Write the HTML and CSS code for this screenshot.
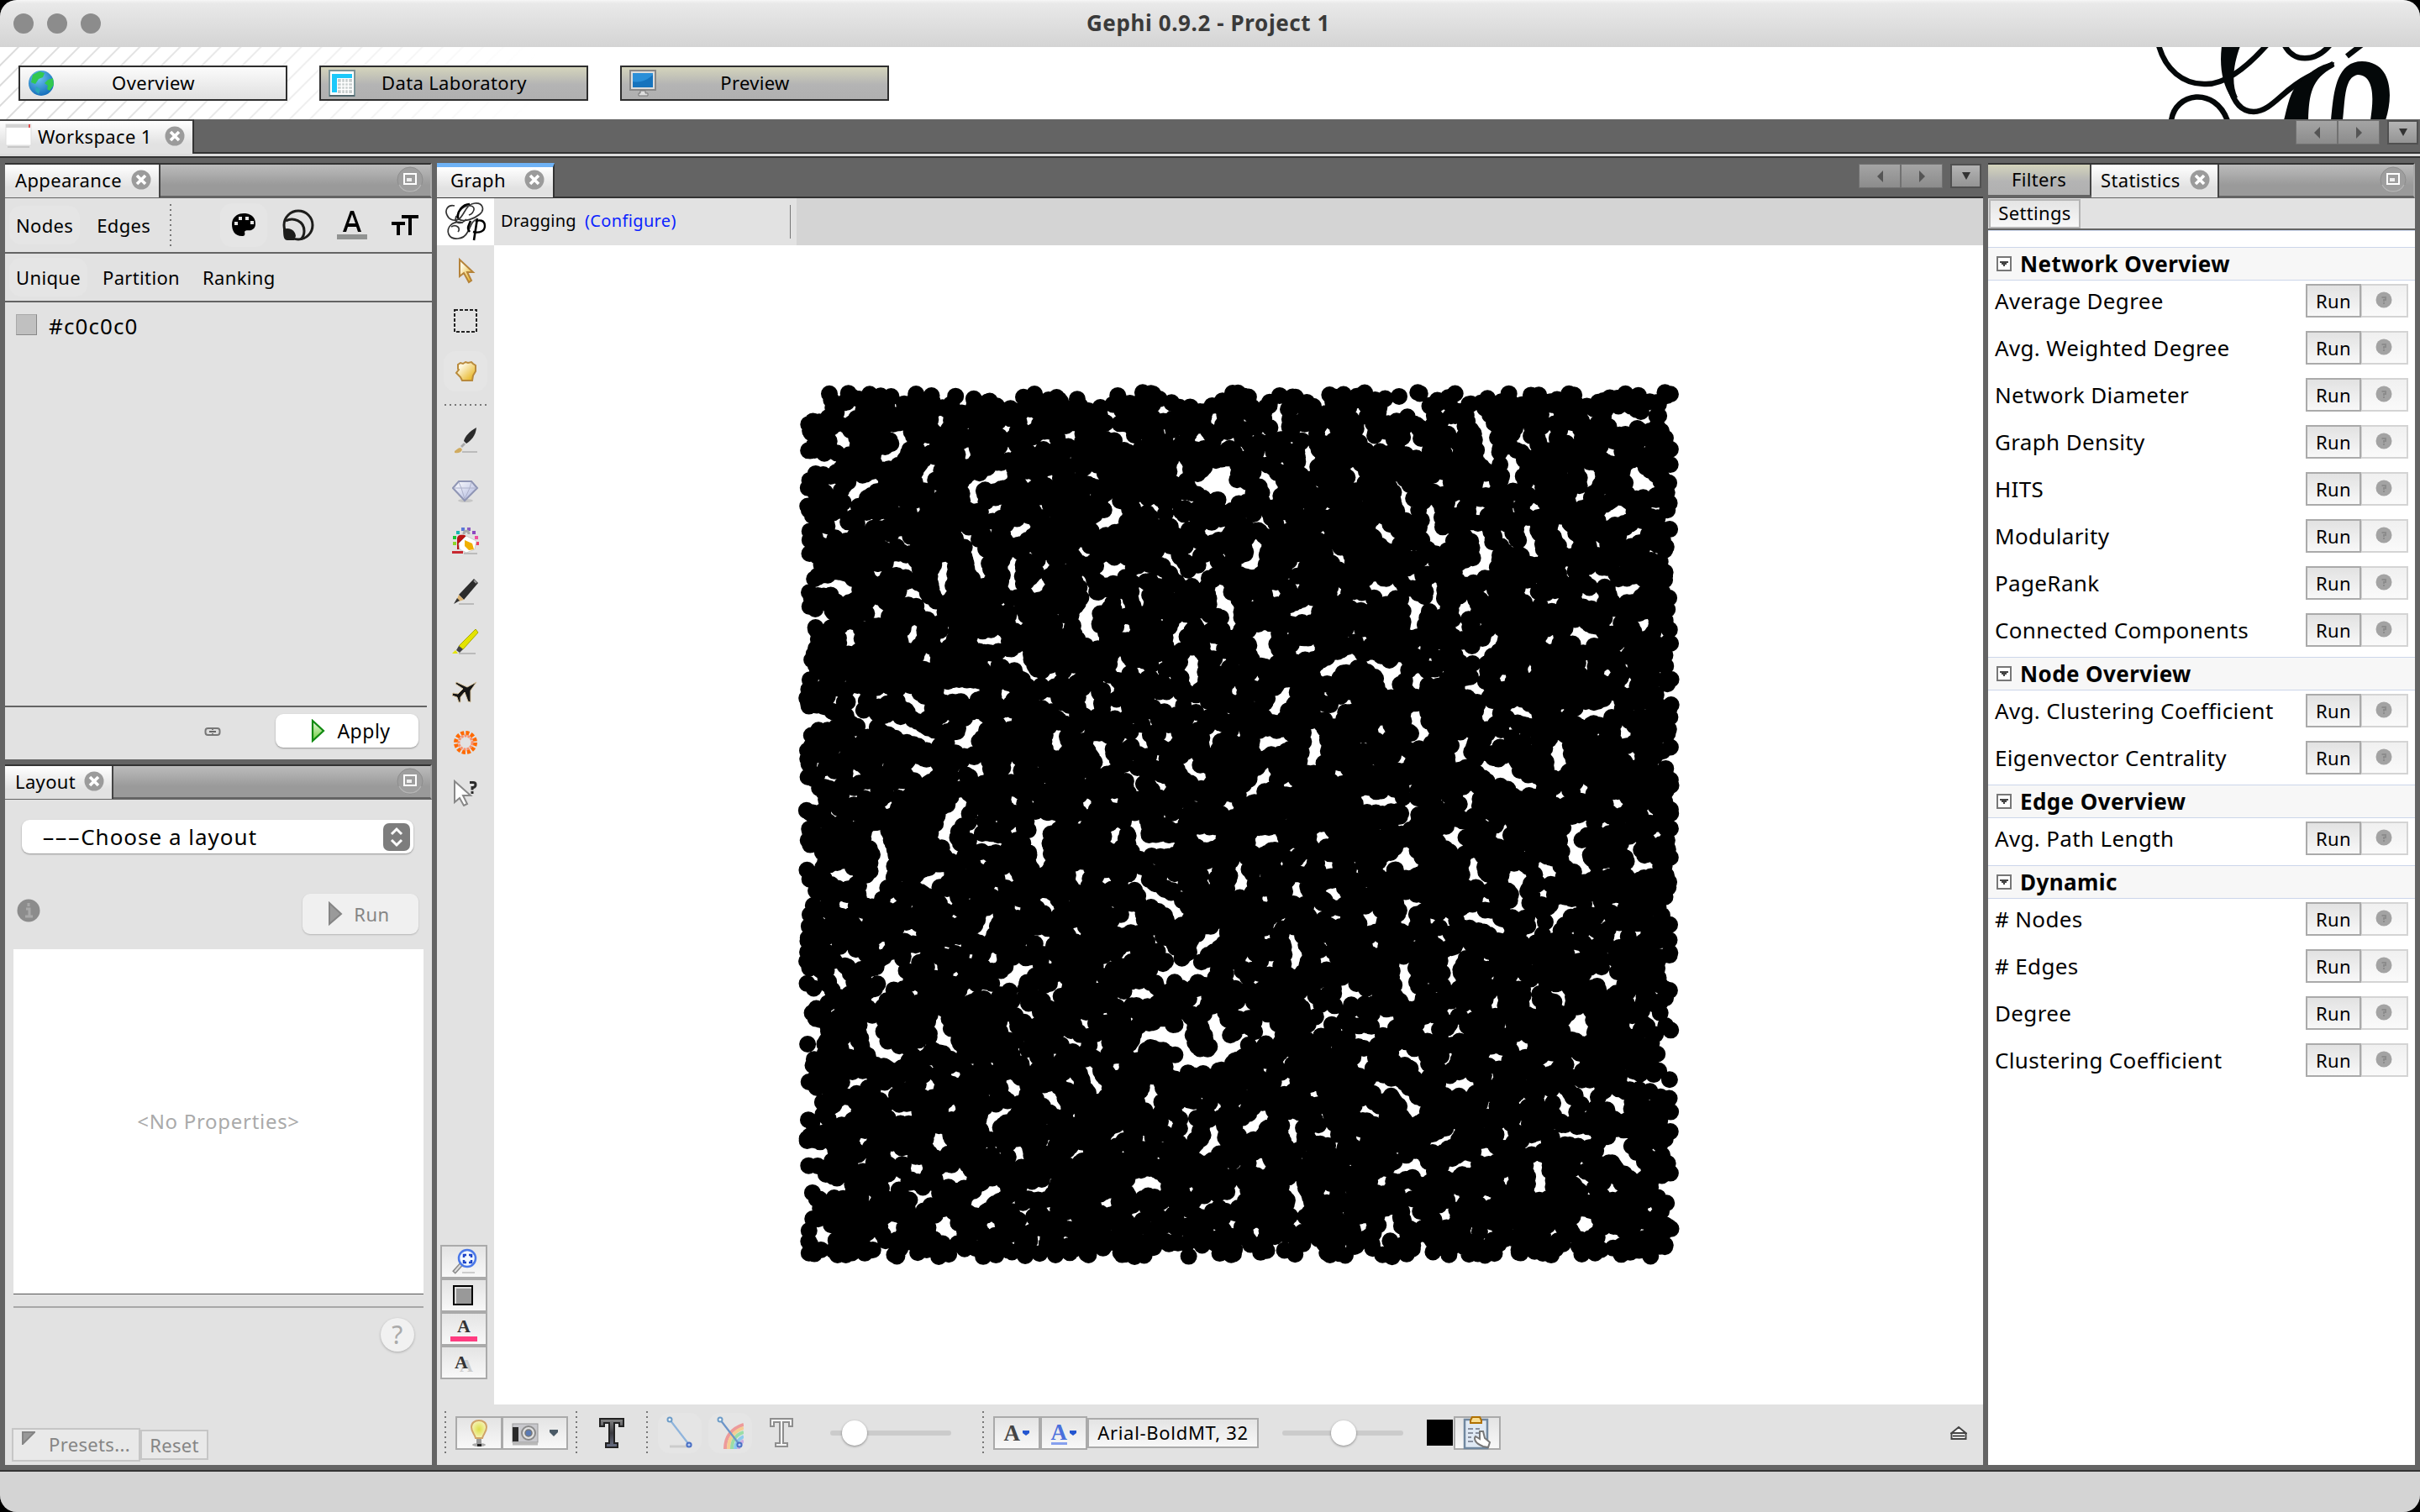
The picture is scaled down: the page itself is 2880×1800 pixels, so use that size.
FILE: index.html
```html
<!DOCTYPE html>
<html lang="en">
<head>
<meta charset="utf-8">
<title>Gephi 0.9.2 - Project 1</title>
<link rel="stylesheet" href="styles.css">
</head>
<body>
<svg width="0" height="0" class="defs">
  <defs>
    <linearGradient id="gold" x1="0" y1="0" x2="1" y2="1"><stop offset=".25" stop-color="#fdf6dc"/><stop offset="1" stop-color="#e3a900"/></linearGradient>
    <linearGradient id="green" x1="0" y1="0" x2="0" y2="1"><stop offset="0" stop-color="#e8f8e0"/><stop offset="1" stop-color="#6ccf3a"/></linearGradient>
    <linearGradient id="gem" x1="0" y1="0" x2="1" y2="1"><stop offset="0" stop-color="#fff"/><stop offset="1" stop-color="#a9b2dc"/></linearGradient>
    <radialGradient id="bulb" cx=".5" cy=".5" r=".6"><stop offset="0" stop-color="#dede48"/><stop offset=".6" stop-color="#efee98"/><stop offset="1" stop-color="#fbf8d8"/></radialGradient>
    <linearGradient id="tdark" x1="0" y1="0" x2="0" y2="1"><stop offset="0" stop-color="#888"/><stop offset=".5" stop-color="#3a3a3f"/><stop offset="1" stop-color="#6a7086"/></linearGradient>
    <radialGradient id="sea" cx=".4" cy=".3" r=".8"><stop offset="0" stop-color="#6cc4f0"/><stop offset="1" stop-color="#0a63b4"/></radialGradient>
  </defs>
  <symbol id="close" viewBox="0 0 24 24"><circle cx="12" cy="12" r="11.500" fill="#9b9b9b"/><path d="M7 7l10 10M17 7L7 17" stroke="#fff" stroke-width="3.600"/></symbol>
  <symbol id="dock" viewBox="0 0 32 32"><circle cx="16" cy="16" r="15" fill="#9e9e9e" stroke="#8d8d8d"/><path d="M3 22a14.500 14.500 0 0 0 26 0" fill="none" stroke="#b4b4b4" stroke-width="1.500"/><rect x="9" y="9" width="14" height="12" fill="none" stroke="#fff" stroke-width="2"/><rect x="12" y="14" width="6" height="4" fill="#eee"/></symbol>
  <symbol id="fold" viewBox="0 0 18 18"><rect x="1" y="1" width="16" height="16" fill="#fff" stroke="#777" stroke-width="2"/><path d="M4 6h10v2h-2v2h-2v2H8v-2H6V8H4z" fill="#444"/></symbol>
  <symbol id="ask" viewBox="0 0 20 20"><circle cx="10" cy="10" r="9.500" fill="#a3a3a3"/><path d="M7.500 7h4.500v3h-2v2M10 13v2" fill="none" stroke="#8c8c8c" stroke-width="2"/></symbol>
</svg>

<div class="window">
  <header class="titlebar">
    <div class="lights"><i></i><i></i><i></i></div>
    <h1>Gephi 0.9.2 - Project 1</h1>
  </header>

  <nav class="banner">
    <button class="mode on"><svg class="mi" viewBox="0 0 32 32"><circle cx="16" cy="16" r="15" fill="url(#sea)"/><path d="M6 6l8-4 6 2-2 5-5 2-4 6-5-2zM24 12l6-2 1 8-5 7-3-2 1-4-4-3z" fill="#32c850"/><path d="M10 20l5 3-2 6-4-4z" fill="#2aa8b8"/></svg><span>Overview</span></button>
    <button class="mode"><svg class="mi" viewBox="0 0 32 32"><rect x="1" y="1" width="30" height="30" fill="#fff" stroke="#7c9498" stroke-width="2"/><path d="M4 5h24v5H10v17H4z" fill="#1cc8fa"/><path d="M11 11h17v17H11z" fill="#c6cccc"/><path d="M15.500 11v17M19.500 11v17M23.500 11v17M11 15.500h17M11 19.500h17M11 23.500h17" stroke="#fff" stroke-width="1.500"/><path d="M1 31h30" stroke="#50666c" stroke-width="2"/></svg><span>Data Laboratory</span></button>
    <button class="mode"><svg class="mi" viewBox="0 0 32 32"><rect x="1" y="1" width="30" height="23" fill="#ddd" stroke="#888" stroke-width="2"/><rect x="4" y="4" width="24" height="17" fill="#2b8fd8"/><path d="M4 14c10 2 18-2 24-8v15H4z" fill="#1673bd"/><path d="M13 25h6v3h3v3H11v-3h2z" fill="#ddd" stroke="#777"/></svg><span>Preview</span></button>
    <svg class="logo" width="300" height="86" viewBox="0 0 300 86">
      <g fill="none" stroke="#040809" stroke-width="6.500">
        <path d="M9 -2C17 27 38 44 63 44Q95 46 139 -4"/>
        <path d="M24 88C28 54 76 46 91 88"/>
        <path d="M158 -4C168 19 196 19 214 -4"/>
        <path d="M251 -3L233 11"/>
        <path d="M93 45C98 66 108 77 122 77C144 76 155 52 186 36L217 20"/>
      </g>
      <path d="M84 -1H106C98 20 95 44 103 60L95 60C85 44 81 24 84 -1zM158 87C162 72 164 60 170 50C185 32 200 20 218 18L217 24C190 38 188 58 187 87zM214 87C217 60 218 17 251 17C288 18 288 60 279 87H261C265 62 266 34 246 33C230 36 231 60 228 87z" fill="#040809"/>
    </svg>
  </nav>

  <div class="wsbar">
    <div class="tab ws"><svg width="32" height="30" viewBox="0 0 32 30"><rect x="1" y="1" width="30" height="25" fill="#fff" stroke="#ddd"/><path d="M1 3h28" stroke="#d4d4d4" stroke-width="4"/><path d="M29 1v4" stroke="#e05050" stroke-width="2"/><path d="M3 28h26" stroke="#c8c8c8" stroke-width="2"/></svg><span>Workspace 1</span><svg class="x"><use href="#close"/></svg></div>
    <div class="pager"><i class="l"></i><i class="r"></i><b></b></div>
  </div>
  <div class="rule"></div>

  <main class="work">
    <div class="leftcol">
      <section class="panel appearance">
        <div class="tabs"><div class="tab t1"><span>Appearance</span><svg class="x"><use href="#close"/></svg></div><svg class="dock"><use href="#dock"/></svg></div>
        <div class="bar bar1">
          <span class="pill n">Nodes</span><span class="ed">Edges</span><i class="dots v"></i>
          <div class="looks">
            <span class="pill pal"><svg width="30" height="30" viewBox="0 0 30 30"><path d="M15 1C6 1 1 7 1 14s3 14 12 14c3 0 4-1 3-5 2-3 5-1 8-2 4-2 5-4 5-8C29 5 23 1 15 1z"/><g fill="#e4e4e4"><rect x="9" y="5" width="4" height="4"/><rect x="17" y="5" width="4" height="4"/><rect x="23" y="10" width="4" height="4"/><rect x="4" y="11" width="4" height="4"/></g></svg></span>
            <svg width="38" height="38" viewBox="0 0 38 38"><g fill="none" stroke="#1d1d1b" stroke-width="3"><circle cx="19" cy="19" r="17"/><path d="M4 14c9-5 22 0 22 12 0 5-2 8-4 10"/></g><path d="M1 24c8-3 14 1 15 8l-2 5H6c-4 0-5-4-5-13z" fill="#1d1d1b"/></svg>
            <svg width="36" height="38" viewBox="0 0 36 38"><path d="M7 27h4l2-6h10l2 6h4L20 2h-4zM14 17l4-11 4 11z" fill-rule="evenodd"/><rect y="30" width="36" height="6" fill="#919392"/></svg>
            <svg width="32" height="26" viewBox="0 0 32 26"><path d="M12 1h20v4h-8v20h-4V5h-8zM0 9h16v4h-6v12H6V13H0z"/></svg>
          </div>
        </div>
        <div class="bar bar2"><span class="pill n">Unique</span><span>Partition</span><span>Ranking</span></div>
        <div class="color"><i></i><span>#c0c0c0</span></div>
        <div class="apply">
          <svg width="20" height="12" viewBox="0 0 20 12"><rect x="1.500" y="2" width="17" height="8" rx="3" fill="#ddd" stroke="#777" stroke-width="2"/><path d="M6 6h8" stroke="#666" stroke-width="2"/><path d="M10 1v3M10 8v3" stroke="#777" stroke-width="2"/></svg>
          <button class="mac"><svg width="18" height="28" viewBox="0 0 18 28"><path d="M2 2v24L15 14z" fill="url(#green)" stroke="#108a10" stroke-width="2.200"/></svg><span>Apply</span></button>
        </div>
      </section>

      <section class="panel layout">
        <div class="tabs"><div class="tab t2"><span>Layout</span><svg class="x"><use href="#close"/></svg></div><svg class="dock"><use href="#dock"/></svg></div>
        <div class="lay">
          <div class="combo"><span><em>---</em>Choose a layout</span><svg width="32" height="33" viewBox="0 0 32 33"><rect width="32" height="33" rx="7" fill="#7d7d7d"/><path d="M10 13l6-6 6 6M10 20l6 6 6-6" fill="none" stroke="#fff" stroke-width="3"/></svg></div>
          <div class="runrow"><svg width="28" height="28" viewBox="0 0 28 28"><circle cx="14" cy="14" r="13.500" fill="#8c8c8c"/><path d="M14 5v4M11 12h4v8M10 21h9" stroke="#a9a9a9" stroke-width="3" fill="none"/></svg>
            <button class="mac off"><svg width="18" height="30" viewBox="0 0 18 30"><path d="M2 2v25L16 15z" fill="#9a9a9a" stroke="#858585" stroke-width="2"/></svg><span>Run</span></button></div>
          <div class="props">&lt;No Properties&gt;</div>
          <div class="hr"></div>
          <div class="help">?</div>
          <div class="presets"><span class="p1"><svg width="16" height="16" viewBox="0 0 16 16"><path d="M1 1h14L1 15z" fill="#999" stroke="#858585" stroke-width="2"/></svg>Presets...</span><span class="p2">Reset</span></div>
        </div>
      </section>
    </div>

    <section class="panel graph">
      <div class="gtabs"><div class="tab"><span>Graph</span><svg class="x"><use href="#close"/></svg></div><div class="pager"><i class="l"></i><i class="r"></i><b></b></div></div>
      <div class="gprops">
        <div class="glogo"><svg width="50" height="48" viewBox="0 0 50 48"><g fill="none" stroke="#333" stroke-width="1.700"><path d="M12 5C4 3 0 10 3 16c2 5 8 8 14 5C24 16 25 3 36 2c10-1 12 8 6 13-6 5-18 10-25 6-6-4 4-17 14-16 7 1 4 9-2 11"/><path d="M22 25C8 22 2 32 5 39c4 8 18 6 22-2 4-6 5-15 12-16"/><path d="M8 30c6-4 12 2 8 6M14 17c-3 8 4 12 12 4"/></g><path d="M16 20c-1-8 5-17 14-17M31 23c-2 6-5 8-1 13M39 20l-4 26" fill="none" stroke="#000" stroke-width="2.600"/><path d="M37 24c4-3 11-2 11 5 0 6-6 9-14 7" fill="none" stroke="#000" stroke-width="2.400"/></svg></div>
        <span>Dragging</span><a>(Configure)</a><i></i><div class="rest"></div>
      </div>
      <div class="gmid">
        <div class="tools">
          <div class="t h1"><svg class="ic" viewBox="0 0 32 32"><path d="M9 3v20l5-4 6 11 3-2-5-10h7z" fill="url(#gold)" stroke="#b5833a" stroke-width="2"/></svg></div>
          <div class="t"><svg class="ic" viewBox="0 0 32 32"><rect x="3" y="3" width="26" height="26" fill="none" stroke="#222" stroke-width="2" stroke-dasharray="4 2"/></svg></div>
          <div class="t"><span class="pill hand"><svg class="ic" viewBox="0 0 32 32"><path d="M7 13V8l3-2 3 1 3-2 3 1 4-1 2 2 3 2v7l-3 5-1 6H12l-2-4-5-5 3-4z" fill="url(#gold)" stroke="#b98a3c" stroke-width="2"/></svg></span></div>
          <i class="dots h"></i>
          <div class="t h2"><svg class="ic" viewBox="0 0 32 32"><path d="M12 30h18" stroke="#bbb" stroke-width="2"/><path d="M29 1c-8 4-14 11-15 16l3 3c6-4 11-9 12-19z" fill="#2b2b2b"/><path d="M14 19l-4 4 2 2 4-4z" fill="#aaa"/><path d="M3 29c2-1 4-4 7-4l2 2c-1 4-5 5-9 4z" fill="#d0ab60"/></svg></div>
          <div class="t"><svg class="ic" viewBox="0 0 32 32"><ellipse cx="16" cy="28" rx="9" ry="2" fill="#c6c6c6"/><path d="M8 5h15l7 8-15 15L1 13z" fill="url(#gem)" stroke="#8f95b4" stroke-width="2"/><path d="M2 13h27M8 6l3 7 4 13 6-13 2-7" fill="none" stroke="#aeb2cb"/></svg></div>
          <div class="t"><svg class="ic" viewBox="0 0 32 32"><g><rect x="5" y="4" width="4" height="4" fill="#18b8b0"/><rect x="11" y="0" width="4" height="4" fill="#5a78d8"/><rect x="18" y="0" width="4" height="4" fill="#8c5ac0"/><rect x="24" y="4" width="4" height="4" fill="#8c48c0"/><rect x="27" y="10" width="4" height="4" fill="#f050a0"/><rect x="28" y="17" width="4" height="4" fill="#f04060"/><rect x="1" y="10" width="4" height="4" fill="#18c838"/><rect x="1" y="17" width="4" height="4" fill="#8cd828"/></g><path d="M14 8c0-5 6-5 6 0" fill="none" stroke="#aaa" stroke-width="3"/><path d="M6 26V13c0-4 4-5 9-4l4 3-9 6v8z" fill="#b81414"/><path d="M8 19l9-9 12 6-2 10-10 4-8-4z" fill="#fff" stroke="#ccc"/><path d="M15 15l9 4 2 7-6 1-5-5z" fill="#f0b000"/><path d="M0 28h13v3H0z" fill="#c82830"/><path d="M14 31h16" stroke="#bbb" stroke-width="2"/></svg></div>
          <div class="t"><svg class="ic" viewBox="0 0 32 32"><path d="M8 31h18" stroke="#bbb" stroke-width="2"/><path d="M26 1l5 5-17 20-6-6z" fill="#2c2c2c"/><path d="M26 3l3 3" stroke="#999" stroke-width="2"/><path d="M8 20l6 6-6 2-2-3z" fill="#d8b070"/><path d="M6 24l3 3-7 4z" fill="#333"/></svg></div>
          <div class="t"><svg class="ic" viewBox="0 0 32 32"><path d="M8 30h20" stroke="#bbb" stroke-width="2"/><path d="M28 1l3 4-18 20-5-4z" fill="#e4e400" stroke="#a8a800"/><path d="M8 21l5 4-4 4-4-3z" fill="#444"/><path d="M4 26l3 4H0z" fill="#e4e400"/></svg></div>
          <div class="t"><svg class="ic" viewBox="0 0 32 32"><path d="M5 4l13 6 11-6-7 10 0 14-3-1-4-11-5 6 0 6-2 0-2-6-6-2 1-3 6 1 6-6-9-6z" fill="#151515" stroke="#d8c4a0" stroke-width="1"/></svg></div>
          <div class="t"><svg class="ic" viewBox="0 0 32 32"><circle cx="16" cy="16" r="11.500" fill="none" stroke="#ff6a00" stroke-width="5" stroke-dasharray="4 2.020"/><circle cx="16" cy="16" r="8" fill="none" stroke="#f8906c" stroke-width="3" stroke-dasharray="3 1"/></svg></div>
          <div class="t"><svg class="ic" viewBox="0 0 32 32"><path d="M3 2v25l6-5 5 9 4-2-5-10h9z" fill="#fff" stroke="#888" stroke-width="2"/><path d="M21 3.500h4c4 0 4 5 0 6h-1v3M24 14v3" fill="none" stroke="#2c2c2c" stroke-width="3"/></svg></div>
          <div class="views">
            <span><svg class="ic" viewBox="0 0 32 32"><path d="M14 29h15" stroke="#ccc" stroke-width="2"/><path d="M14 18L4 29" stroke="#888" stroke-width="5"/><path d="M13 19L5 28" stroke="#ddd" stroke-width="2"/><circle cx="20" cy="12" r="10" fill="#f2f8ff" stroke="#4a78e8" stroke-width="2.500"/><path d="M16 11V8h3M22 8h3v3M25 14v3h-3M19 17h-3v-3" fill="none" stroke="#1c44c8" stroke-width="2.500"/></svg></span>
            <span><svg class="ic" viewBox="0 0 32 32"><rect x="4" y="5" width="22" height="22" fill="#999" stroke="#000" stroke-width="2"/><path d="M6 26V7h19" fill="none" stroke="#ddd" stroke-width="2"/></svg></span>
            <span class="aa"><b>A</b><em></em></span>
            <span class="aa sh"><b>A</b></span>
          </div>
        </div>
        <canvas id="net" width="1772" height="1380"></canvas>
      </div>
      <div class="gbot">
        <i class="dots v d1"></i>
        <div class="grp g1">
          <span class="btn w55"><svg class="ic" viewBox="0 0 32 32"><ellipse cx="16" cy="30" rx="8" ry="2" fill="#aaa"/><path d="M12 22c-1-5-5-7-5-13C7 4 11 1 16 1s9 3 9 8c0 6-4 8-5 13z" fill="url(#bulb)" stroke="#d0a468" stroke-width="2"/><path d="M13 23h6v6l-3 2-3-2z" fill="#999"/><path d="M14 29h5v3h-5z" fill="#222"/></svg></span>
          <span class="btn w79"><svg class="ic" viewBox="0 0 32 32"><path d="M1 29h30" stroke="#b8b8b8" stroke-width="3"/><rect x="1" y="5" width="30" height="22" fill="#c8c8cc" stroke="#999"/><rect x="1" y="9" width="7" height="17" fill="#2a2a2a"/><circle cx="20" cy="16" r="8" fill="#e0e0e0" stroke="#8a8a8a" stroke-width="2"/><circle cx="20" cy="16" r="4" fill="#5a7ab4" stroke="#777" stroke-width="1.500"/></svg><svg width="10" height="8" viewBox="0 0 10 8"><path d="M0 0h10v3L5 8 0 3z" fill="#4a5a66"/></svg></span>
        </div>
        <i class="dots v d2"></i>
        <svg class="tt" width="32" height="40" viewBox="0 0 32 40"><path d="M2 3h28v9h-5V8h-6v24h4v5H9v-5h4V8H7v4H2z" fill="url(#tdark)" stroke="#222" stroke-width="2"/></svg>
        <i class="dots v d3"></i>
        <span class="pill e1"><svg width="32" height="42" viewBox="0 0 32 42"><path d="M4 37h22" stroke="#ccc" stroke-width="3"/><path d="M4 5l24 31" stroke="#8fb4dc" stroke-width="2.200"/><circle cx="4" cy="5" r="2.500" fill="#fff" stroke="#6c9cc8" stroke-width="2"/><circle cx="27" cy="35" r="2.600" fill="#bcd0f4" stroke="#4a70c4" stroke-width="2"/></svg></span>
        <span class="pill e2"><svg width="32" height="42" viewBox="0 0 32 42"><g fill="none" stroke-width="4" opacity=".8"><path d="M10 40c0-14 7-24 22-29" stroke="#f08888"/><path d="M14 40c0-12 6-21 18-25" stroke="#f8c880"/><path d="M18 40c0-10 5-17 14-20" stroke="#88dc98"/><path d="M22 40c0-8 4-12 10-15" stroke="#78c4f0"/><path d="M26 40c0-5 3-8 6-10" stroke="#c4a0e0"/></g><path d="M4 5l24 31" stroke="#6c94c8" stroke-width="2.200"/><circle cx="4" cy="5" r="2.500" fill="#fff" stroke="#6c9cc8" stroke-width="2"/><circle cx="27" cy="35" r="2.600" fill="#bcd0f4" stroke="#4a70c4" stroke-width="2"/></svg></span>
        <svg class="to" width="32" height="40" viewBox="0 0 32 40"><path d="M3 3h26v9h-4V7h-7v25h5v4H9v-4h5V7H7v5H3z" fill="#f4f4f4" stroke="#8e8e8e" stroke-width="2"/></svg>
        <div class="slider s1"><i></i></div>
        <i class="dots v d4"></i>
        <div class="grp g2">
          <span class="btn w56 fa"><b>A</b><svg width="8" height="6" viewBox="0 0 8 6"><path d="M0 0h8v3L4 6 0 3z" fill="#2456d0"/></svg></span>
          <span class="btn w56 fa blue"><b>A</b><svg width="8" height="6" viewBox="0 0 8 6"><path d="M0 0h8v3L4 6 0 3z" fill="#2456d0"/></svg></span>
          <span class="btn font">Arial-BoldMT, 32</span>
        </div>
        <div class="slider s2"><i></i></div>
        <div class="swatch"></div>
        <span class="btn w56"><svg width="34" height="40" viewBox="0 0 34 40"><rect x="2" y="4" width="27" height="34" fill="#dfe9f4" stroke="#7088a0" stroke-width="2.500"/><path d="M9 5l2-4h9l2 4v3H9z" fill="#f8dc90" stroke="#b07000" stroke-width="2"/><path d="M6 15h6M6 20h6M6 25h4M6 30h6M15 15h5M15 20h4" stroke="#8890a0" stroke-width="2"/><path d="M20 34c-6-3-7-8-5-10l5 3V18h4l2 8 6 5-2 6-6-1z" fill="#fff" stroke="#777" stroke-width="2"/></svg></span>
        <svg class="eject" width="20" height="18" viewBox="0 0 20 18"><path d="M1.500 9L10 2l8.500 7zM1.500 9h17v7h-17zM3 12.500h14" fill="#fff" stroke="#444" stroke-width="2"/></svg>
      </div>
    </section>

    <section class="panel stats">
      <div class="tabs"><div class="tab t3">Filters</div><div class="tab t4"><span>Statistics</span><svg class="x"><use href="#close"/></svg></div><svg class="dock"><use href="#dock"/></svg></div>
      <div class="set"><span>Settings</span></div>
      <div class="list">
        <h2><svg><use href="#fold"/></svg>Network Overview</h2>
        <ul>
          <li><span>Average Degree</span><b>Run</b><i><svg><use href="#ask"/></svg></i></li>
          <li><span>Avg. Weighted Degree</span><b>Run</b><i><svg><use href="#ask"/></svg></i></li>
          <li><span>Network Diameter</span><b>Run</b><i><svg><use href="#ask"/></svg></i></li>
          <li><span>Graph Density</span><b>Run</b><i><svg><use href="#ask"/></svg></i></li>
          <li><span>HITS</span><b>Run</b><i><svg><use href="#ask"/></svg></i></li>
          <li><span>Modularity</span><b>Run</b><i><svg><use href="#ask"/></svg></i></li>
          <li><span>PageRank</span><b>Run</b><i><svg><use href="#ask"/></svg></i></li>
          <li><span>Connected Components</span><b>Run</b><i><svg><use href="#ask"/></svg></i></li>
        </ul>
        <h2><svg><use href="#fold"/></svg>Node Overview</h2>
        <ul>
          <li><span>Avg. Clustering Coefficient</span><b>Run</b><i><svg><use href="#ask"/></svg></i></li>
          <li><span>Eigenvector Centrality</span><b>Run</b><i><svg><use href="#ask"/></svg></i></li>
        </ul>
        <h2><svg><use href="#fold"/></svg>Edge Overview</h2>
        <ul>
          <li><span>Avg. Path Length</span><b>Run</b><i><svg><use href="#ask"/></svg></i></li>
        </ul>
        <h2><svg><use href="#fold"/></svg>Dynamic</h2>
        <ul>
          <li><span># Nodes</span><b>Run</b><i><svg><use href="#ask"/></svg></i></li>
          <li><span># Edges</span><b>Run</b><i><svg><use href="#ask"/></svg></i></li>
          <li><span>Degree</span><b>Run</b><i><svg><use href="#ask"/></svg></i></li>
          <li><span>Clustering Coefficient</span><b>Run</b><i><svg><use href="#ask"/></svg></i></li>
        </ul>
      </div>
    </section>
  </main>
  <footer class="status"></footer>
</div>
<script src="graph.js"></script>
</body>
</html>
```
FILE: styles.css
```css
* { box-sizing: border-box; }
body { margin: 0; background: #000; font: 22px/28px "Noto Sans", "Open Sans", sans-serif; letter-spacing: .35px; color: #000; }
h1, h2, ul { margin: 0; padding: 0; }
svg { display: block; flex: none; }
button { font: inherit; color: inherit; letter-spacing: inherit; padding: 0; margin: 0; }
i, em { font-style: normal; }
.defs { position: absolute; }
.window { width: 2880px; height: 1800px; display: flex; flex-direction: column; background: #646464; border-radius: 20px; overflow: hidden; white-space: nowrap; }

.titlebar { height: 56px; flex: none; display: grid; grid-template-columns: 300px 1fr 300px; align-items: center; background: linear-gradient(#f6f6f6, #e9e9e9 4px, #d4d4d4); }
.titlebar h1 { font-size: 26px; font-weight: 700; color: #3a3a3a; text-align: center; letter-spacing: .6px; margin: 0 4px 3px 0; }
.lights { display: flex; gap: 16px; padding-left: 16px; }
.lights i { width: 24px; height: 24px; border-radius: 50%; background: #8c8c8c; }

.banner { height: 86px; flex: none; display: flex; align-items: center; gap: 38px; padding: 0 20px 0 22px; background: linear-gradient(90deg, rgba(255,255,255,.1), #fff 640px), repeating-linear-gradient(135deg, #fff 0 14px, #d6d6d6 15px 16px, #fff 17px); }
.mode { width: 320px; height: 42px; border: 2px solid #2e2e2e; background: linear-gradient(#d4d4bc, #b4b4b4 55%, #b0b0b0); display: flex; align-items: center; padding: 0 9px; }
.mode.on { background: linear-gradient(#fbfbfb, #e0e0e0); }
.mode span { flex: 1; text-align: center; padding: 0 31px 3px 0; }
.mi { width: 32px; height: 32px; }
.logo { margin-left: auto; }

.wsbar { height: 41px; flex: none; display: flex; justify-content: space-between; border-bottom: 2px solid #333; padding-right: 2px; }
.tab { display: flex; align-items: center; background: linear-gradient(#fff, #e2e2e2 70%); flex: none; padding-bottom: 3px; }
.tab .x { width: 24px; height: 24px; }
.ws { width: 231px; height: 41px; padding: 0 0 4px 6px; border-right: 2px solid #333; border-top: 2px solid #444; }
.ws span { padding-left: 7px; width: 158px; }
.pager { display: flex; height: 29px; margin-top: 1px; }
.pager i, .pager b { display: flex; align-items: center; justify-content: center; border: 1px solid #717171; background: linear-gradient(#a4a4a4, #8c8c8c); width: 50px; }
.pager b { width: 37px; margin-left: 9px; background: linear-gradient(#b4b4b4, #949494); border: 2px solid #505050; }
.pager i::before { content: ""; border: 7px solid transparent; }
.pager .l::before { border-right-color: #555; border-left: 0; }
.pager .r::before { border-left-color: #555; border-right: 0; }
.pager b::before { content: ""; border: 5px solid transparent; border-top: 9px solid #333; border-bottom: 0; }
.rule { height: 5px; flex: none; background: #dcdcdc; border-bottom: 2px solid #333; }

.work { flex: 1; display: grid; grid-template-columns: 508px 1840px 508px; column-gap: 6px; padding: 6px 6px; min-height: 0; }
.panel { display: flex; flex-direction: column; min-height: 0; background: #e2e2e2; }
.leftcol { display: grid; grid-template-rows: 710px 834px; row-gap: 6px; }
.tabs { height: 42px; flex: none; display: flex; background: linear-gradient(#bcbcbc, #9a9a9a 65%); border-top: 2px solid #333; border-bottom: 3px solid #646464; border-right: 2px solid #aaa; }
.tabs .tab { height: 39px; border-right: 2px solid #444; padding-left: 12px; justify-content: space-between; padding-right: 9px; }
.tabs .dock { width: 32px; height: 32px; margin: 2px 8px 0 auto; }
.t1 { width: 185px; }
.t2 { width: 129px; }
.pill { background: #e5e5e5; border-radius: 14px; display: flex; align-items: center; justify-content: center; }
.bar { display: flex; align-items: center; border-bottom: 2px solid #646464; flex: none; }
.bar1 { height: 66px; }
.bar2 { height: 58px; gap: 27px; padding-bottom: 1px; }
.pill.n { height: 46px; padding: 0 8px; margin-left: 5px; }
.bar2 .pill.n { margin-right: -9px; }
.ed { width: 64px; margin: 0 23px 0 20px; }
.dots { flex: none; display: block; }
.dots.v { width: 2px; height: 50px; background: repeating-linear-gradient(#777 0 2px, transparent 2px 6px); }
.dots.h { width: 50px; height: 2px; background: repeating-linear-gradient(90deg, #777 0 2px, transparent 2px 6px); }
.looks { display: flex; align-items: center; margin-left: 58px; }
.pal { width: 56px; height: 52px; margin-right: 18px; }
.looks > svg:nth-child(2) { margin-right: 27px; }
.looks > svg:nth-child(3) { margin-right: 29px; }
.color { flex: 1; display: flex; align-items: flex-start; padding: 14px 13px; font-size: 26px; gap: 14px; letter-spacing: 1.1px; }
.color i { width: 25px; height: 25px; background: #c0c0c0; border: 1px solid #aaa; border-right-color: #888; border-bottom-color: #888; }
.apply { height: 64px; margin-right: 6px; border-top: 2px solid #646464; display: flex; align-items: flex-start; padding: 8px 10px 0 0; justify-content: flex-end; }
.apply > svg { margin: 15px 65px 0 0; }
.mac { width: 170px; height: 40px; border: 0; border-radius: 9px; background: #fff; box-shadow: 0 1px 2px rgba(0,0,0,.35); display: flex; align-items: center; justify-content: center; gap: 13px; padding-left: 9px; font-size: 23px; letter-spacing: .5px; }
.mac.off { width: 138px; height: 48px; background: #f0f0f0; color: #858585; gap: 13px; font-size: 22px; padding: 0 10px 0 6px; box-shadow: 0 1px 2px rgba(0,0,0,.2); }

.lay { flex: 1; display: flex; flex-direction: column; padding: 24px 10px 4px 10px; }
.combo { width: 466px; height: 40px; margin-left: 10px; border-radius: 9px; background: #fff; box-shadow: 0 1px 2px rgba(0,0,0,.35); display: flex; align-items: center; justify-content: space-between; padding: 0 4px 0 24px; font-size: 26px; letter-spacing: 1px; }
.combo em { display: inline-block; letter-spacing: 0; transform: scaleX(1.8); transform-origin: left; margin-right: 21px; }
.runrow { display: flex; justify-content: space-between; margin-top: 48px; padding: 0 6px 0 4px; }
.runrow > svg { margin-top: 6px; }
.props { height: 411px; margin-top: 18px; background: #fff; border-bottom: 1px solid #555; color: #aaa; display: flex; align-items: center; justify-content: center; font-size: 24px; letter-spacing: .7px; }
.hr { height: 2px; background: #a8a8a8; margin-top: 14px; }
.help { width: 40px; height: 40px; border-radius: 50%; background: #f1f1f1; color: #aaa; box-shadow: 0 1px 3px rgba(0,0,0,.25); margin: 12px 11px 0 auto; font-size: 30px; line-height: 40px; text-align: center; }
.presets { display: flex; align-items: center; margin: auto 0 0 -2px; color: #858585; }
.presets span { border: 2px solid #c6c6c6; background: #e9e9e9; display: flex; }
.p1 { width: 153px; height: 40px; padding: 3px 0 0 10px; gap: 16px; }
.p2 { width: 81px; height: 36px; justify-content: center; align-items: center; padding-bottom: 1px; }
.p1 svg { margin-top: -1px; }

.gtabs { height: 42px; background: #646464; display: flex; justify-content: space-between; border-bottom: 2px solid #333; padding-right: 1px; flex: none; }
.gtabs .tab { width: 140px; height: 41px; border-top: 5px solid #6fb2f5; border-right: 2px solid #333; padding: 0 10px 6px 16px; justify-content: space-between; }
.gtabs .pager { margin-right: 1px; }
.gprops { height: 56px; flex: none; display: flex; align-items: center; font-size: 20px; letter-spacing: .2px; }
.glogo { width: 68px; height: 56px; background: #fff; padding: 4px 9px; margin-right: 8px; }
.gprops span { width: 100px; padding-bottom: 2px; }
.gprops a { color: #0a22ff; width: 244px; padding-bottom: 2px; letter-spacing: .35px; }
.gprops i { width: 1px; height: 40px; background: #777; margin-right: 7px; }
.rest { flex: 1; height: 56px; background: #d4d4d4; }
.gmid { display: flex; height: 1380px; flex: none; }
.gmid canvas { background: #fff; display: block; }
.tools { width: 68px; display: flex; flex-direction: column; align-items: center; }
.ic { width: 32px; height: 32px; }
.t { height: 60px; display: flex; align-items: center; }
.t .hand { width: 52px; height: 48px; }
.dots.h { margin: 9px 0 11px; }
.views { margin-top: 508px; width: 56px; margin-right: 4px; }
.views span, .btn { border: 2px solid #aaa; background: linear-gradient(#e4e4e4, #f8f8f8); display: flex; align-items: center; justify-content: center; height: 40px; }
.views .aa { flex-direction: column; font-family: "Liberation Serif", serif; font-size: 22px; line-height: 22px; color: #333; }
.aa em { width: 32px; height: 6px; background: #ff3c80; margin-top: 3px; }
.aa b { height: 20px; }
.aa.sh b { text-shadow: 6px 4px 0 #ccc; margin: 0 6px 3px 0; }

.gbot { height: 72px; flex: none; display: flex; align-items: center; padding-left: 9px; padding-bottom: 5px; }
.gbot .dots { margin-bottom: 1px; }
.grp { display: flex; align-items: center; }
.g1 { margin: 0 9px 0 11px; }
.w55 { width: 56px; }
.w79 { width: 79px; gap: 13px; margin-left: -1px; }
.w56 { width: 56px; }
.tt { margin: 0 25px 0 25px; }
.e1, .e2 { width: 52px; height: 48px; }
.e1 { margin: 0 8px 0 12px; }
.to { margin: 0 42px 0 19px; }
.slider { width: 144px; height: 6px; border-radius: 3px; background: #cbcbcb; display: flex; align-items: center; }
.slider i { width: 30px; height: 30px; border-radius: 50%; background: #fff; box-shadow: 0 1px 3px rgba(0,0,0,.4); margin-left: 14px; }
.s2 i { margin-left: 58px; }
.d4 { margin-left: 37px; }
.g2 { margin: 0 28px 0 11px; }
.fa { font-family: "Liberation Serif", serif; font-size: 27px; color: #444; gap: 3px; }
.fa b { line-height: 24px; }
.blue { color: #4a70dc; }
.blue b { border-bottom: 3px solid #86a0ee; margin-top: 2px; }
.font { height: 36px; width: 204px; font-size: 22px; letter-spacing: .7px; padding-bottom: 1px; }
.swatch { width: 31px; height: 31px; background: #000; margin: 0 1px 0 28px; }
.eject { margin-left: auto; margin-right: 19px; }

.stats { background: #fff; }
.tabs .t3 { width: 123px; padding-left: 28px; background: linear-gradient(#d4d4bc, #b4b4b4 55%, #b0b0b0); border-bottom: 2px solid #646464; height: 38px; }
.tabs .t4 { width: 152px; padding-left: 11px; }
.set { height: 38px; background: #e2e2e2; border-bottom: 2px solid #646464; flex: none; }
.set span { display: flex; align-items: center; justify-content: center; width: 109px; height: 35px; margin: 1px 0 0 1px; padding-bottom: 3px; border: 2px solid #b4b4b4; background: linear-gradient(#e4e4e4, #f8f8f8); }
.list { border-top: 1px solid #cfdaf0; padding-top: 19px; }
.list h2 { height: 40px; border: 1px solid #ccd6ea; border-width: 1px 0; background: #f7f7f7; display: flex; align-items: center; gap: 10px; padding-left: 10px; font-size: 26px; letter-spacing: .4px; }
.list h2 svg { width: 18px; height: 18px; }
.list ul { list-style: none; padding: 4px 8px 12px; display: grid; row-gap: 16px; }
.list li { height: 40px; display: flex; align-items: center; font-size: 26px; letter-spacing: .35px; }
.list li span { flex: 1; }
.list b { font-weight: 400; font-size: 22px; width: 66px; height: 40px; border: 2px solid #aaa; background: linear-gradient(#e2e2e2, #f8f8f8); display: flex; align-items: center; justify-content: center; padding-bottom: 1px; }
.list i { width: 56px; height: 40px; border: 2px solid #d4d4d4; border-left-width: 1px; background: linear-gradient(#f0f0f0, #fafafa); display: flex; align-items: center; justify-content: center; }
.list i svg { width: 20px; height: 20px; margin: 0 2px 2px 0; }
.status { height: 50px; flex: none; background: #d4d4d4; border-top: 2px solid #333; }
```
FILE: graph.js
```js
// Sparse regions of the layout: "x,y,x,y,... w" polylines with a half-width, in layout units.
const gaps = `85,100,100,115 4|112,198,148,180 3|40,48,60,55 1|30,150,75,148 1|165,142,190,130,196,100 2|262,68,262,82 2|245,155,243,163 3|310,128,310,138 2|378,90 2|415,80,418,70 1|318,185,322,215 3|348,175,375,165 4|365,225,350,232 3|390,272,415,260 4|545,255,560,250 7|575,232 3|527,170 3|650,55 5|740,70 5|715,105 6|680,150,677,170 2|715,185,750,195,790,200 3|765,215 3|740,160,765,163 2|825,170,845,190 4|850,60,855,85 2|938,93 4|905,130,903,155 3|1045,60,1080,45,1105,65 5|1198,65,1215,100,1218,140 5|1255,140,1260,160 3|1432,130 5|1440,70,1465,70 5|1475,165,1480,190,1500,185 6|1360,95 3|1400,175,1398,165 3|1375,210 5|1425,240,1450,230 4|1300,225 5|1217,185 3|1118,230,1120,260,1130,290 3|1205,275,1208,295 5|1220,310,1215,330,1180,342 3|1290,300,1292,285 3|1345,262,1360,290 4|1480,265 3|1410,290 2|1135,185 3|1030,262,1048,285 2|755,262,730,272 2|815,292,812,325,795,325 5|655,310,670,325 2|508,300 3|555,325,553,345 2|325,305,335,345 3|268,325,265,370 3|390,320,387,365 3|445,330 3|430,365 6|212,375 9|60,363,90,358,100,375 3|185,328,205,328 2|62,275 3|150,400,155,415 3|105,445,105,462 6|218,435,210,455 4|335,460,365,455 4|520,405,517,440 7|535,455 3|545,390 3|588,438 5|238,490 5|270,455 2|400,485,410,505 2|380,490 2|575,490,577,510 2|612,510 2|705,490,702,530 5|750,365,752,385 3|770,400,770,430 2|848,375 5|835,445,815,450,820,480,835,480 3|880,412,905,405 2|885,478,910,470 2|930,515,960,495,980,488 4|1015,495,1040,515,1045,535 4|1060,505 3|1085,390,1092,410,1088,435 4|1095,520,1095,540 3|1020,360,1040,375 4|1125,360,1125,385 2|990,390 2|965,320 2|1180,400 5|1230,450 3|1325,458 5|1370,440,1400,450 3|1400,345,1425,348 2|1450,372,1475,365 5|1490,430 8|1425,515 4|1435,570 4|1245,522 4|1290,508 2|1180,540,1205,548 1|1220,585,1215,595 4|1265,580,1290,590 3|1380,590,1400,583 3|1455,622 6|1470,660 3|1342,640,1340,680 5|1212,678,1235,690,1255,685 4|1275,715 5|1175,635,1165,665 4|1090,585,1100,610 3|1070,665 3|958,690 4|915,620,920,640,912,670 6|825,640,860,632 5|845,580,865,545 5|775,548 4|815,525 2|975,565 3|1030,612 3|820,700,835,690 3|870,710 2|1005,735,1030,742,1050,735 4|1385,715 4|1300,712 2|660,628 6|535,640,545,650 5|550,670 2|465,620,463,645 4|325,602,305,635 8|275,548,320,545 4|205,555,228,580 5|175,605,205,618,245,630 3|25,597,65,597 2|330,683 7|215,682,245,682 3|115,690 4|375,552 4|522,555,525,575 4|380,595 3|45,742 3|170,748 3|300,740,285,770,265,800 6|430,775,455,775 3|432,805,438,840 5|390,735 3|520,740 6|650,715 4|765,745 6|150,800,165,830,160,870,140,895 6|75,865,105,870 2|235,880,262,868 4|380,870 5|505,880,507,860 3|565,805,570,795 4|605,775,607,795 3|615,815,665,815 4|550,878 4|715,800,740,803 2|820,808,845,800 3|925,800 7|940,850 4|790,875,780,885 4|625,898,655,915,680,935 5|880,900,885,885 3|830,910 3|940,895,955,905 3|1075,825,1080,850 5|1195,845,1190,870 4|1212,910 4|1180,940,1215,948,1240,965 3|1260,875,1275,870 8|1310,850,1330,865 4|1315,900 5|1380,780,1360,800,1365,830,1390,860 4|1445,745 3|1500,760 2|1465,820 3|1475,855,1500,850 3|1510,800 2|1440,918 2|95,920 4|125,945 2|180,910 2|212,965 4|350,940,338,970 3|160,990 4|355,1015 5|85,1040,92,1060 5|370,1055,395,1035,420,1028 3|290,1040 3|220,1073 3|470,1055 2|580,955 5|745,972,720,990 5|700,1020,690,1045 4|625,1075,600,1077 3|875,975,885,1000,880,1025 4|1155,1015 8|1075,950 4|1020,990 3|1072,1030,1075,1070,1085,1080 6|1230,1095 4|1150,1105 3|1185,1105 2|1270,1050 1|1295,1095 3|1370,1000 2|1535,1032 10|1540,1100 3|1380,1115,1385,1140 5|1468,1130 3|1278,1165 6|1030,1120,1050,1118 3|1115,1130 4|150,1085 3|140,1130,145,1155,160,1175,190,1185 5|260,1120,262,1155 4|50,1140 3|515,1125 4|620,1150,650,1140,685,1165,700,1190,740,1190,780,1165 6|742,1115,745,1145,755,1165 5|675,1205 4|795,1100 4|1000,1195 5|1068,1180 5|1150,1235,1185,1232 4|1325,1195 4|1435,1255,1450,1280 4|865,1230 6|915,1250 5|1075,1255,1090,1280 3|385,1230,392,1245 6|290,1215 5|245,1235 4|450,1250,468,1270 4|520,1205,538,1245 2|570,1200 4|632,1235,625,1260 3|85,1285,100,1275 5|285,1275 3|350,1310,350,1290,375,1282 3|262,1325,265,1340 4|180,1355 5|125,1330 3|225,1380 7|270,1392,295,1390 4|400,1345,398,1360 3|325,1440,345,1420,360,1415 5|350,1478 5|178,1480 8|90,1412 4|55,1412 3|25,1352,60,1350 4|605,1410,625,1402,640,1410 6|555,1440 6|740,1310,740,1335,720,1350 5|800,1310,825,1285 5|820,1370 7|875,1300,880,1330 4|880,1410,890,1440 4|700,1415 3|770,1475 3|812,1490 4|1000,1480 6|1045,1465,1045,1485 4|1030,1405 4|1060,1385,1090,1370,1105,1388 4|1180,1370 5|1155,1383 2|1305,1375,1308,1415 5|1215,1430 4|1165,1430 2|1145,1462 5|1425,1345,1445,1350,1475,1380 6|1445,1330 3|1345,1320,1395,1325 2|1380,1480,1395,1478 5|1150,1325,1130,1335 2|635,1540,650,1528,665,1540 3|1500,1450 3|1105,1515 3|185,12,230,12 1|290,14,310,14 1|385,16 4|495,14 4|600,14 3|680,14 3|820,14 3|875,14 3|1130,18 6|1210,14 4|1330,18 5|1500,14 3`
  .split('|').map(g => {
    const [pts, w] = g.split(' ');
    return { p: pts.split(',').map(Number), w: +w * 0.75 };
  });

const R = 14.65, K = 1 / 1.4654;
let seed = 20170923;
function rnd() {
  seed = (seed + 0x6D2B79F5) | 0;
  let t = Math.imul(seed ^ (seed >>> 15), 1 | seed);
  t = (t + Math.imul(t ^ (t >>> 7), 61 | t)) ^ t;
  return ((t ^ (t >>> 14)) >>> 0) / 4294967296;
}
function distance(x, y, p) {
  let best = Infinity;
  for (let i = 0; i < p.length; i += 2) {
    const ax = p[i], ay = p[i + 1];
    const bx = i + 3 < p.length ? p[i + 2] : ax, by = i + 3 < p.length ? p[i + 3] : ay;
    const dx = bx - ax, dy = by - ay, l = dx * dx + dy * dy;
    const t = l ? Math.max(0, Math.min(1, ((x - ax) * dx + (y - ay) * dy) / l)) : 0;
    best = Math.min(best, Math.hypot(x - ax - t * dx, y - ay - t * dy));
  }
  return best;
}

const ctx = document.getElementById('net').getContext('2d');
ctx.translate(940 - 588, 450 - 292);
ctx.beginPath();
for (let n = 0; n < 38000; n++) {
  const x = 29 + rnd() * 1508, y = 25 + rnd() * 1508, keep = rnd();
  const rim = Math.min(x - 29, 1537 - x, y - 25, 1533 - y);
  // Nodes pack tightly round a gap, thin out away from it, and are sparsest on the rim.
  if (rim < 16 && keep > 0.25) continue;
  let slack = Infinity;
  for (const g of gaps) slack = Math.min(slack, distance(x, y, g.p) - R - g.w);
  if (slack < 0 || (slack > 8 && keep > 0.3)) continue;
  ctx.moveTo(x * K + 10, y * K);
  ctx.arc(x * K, y * K, 10, 0, Math.PI * 2);
}
ctx.fill();
```
